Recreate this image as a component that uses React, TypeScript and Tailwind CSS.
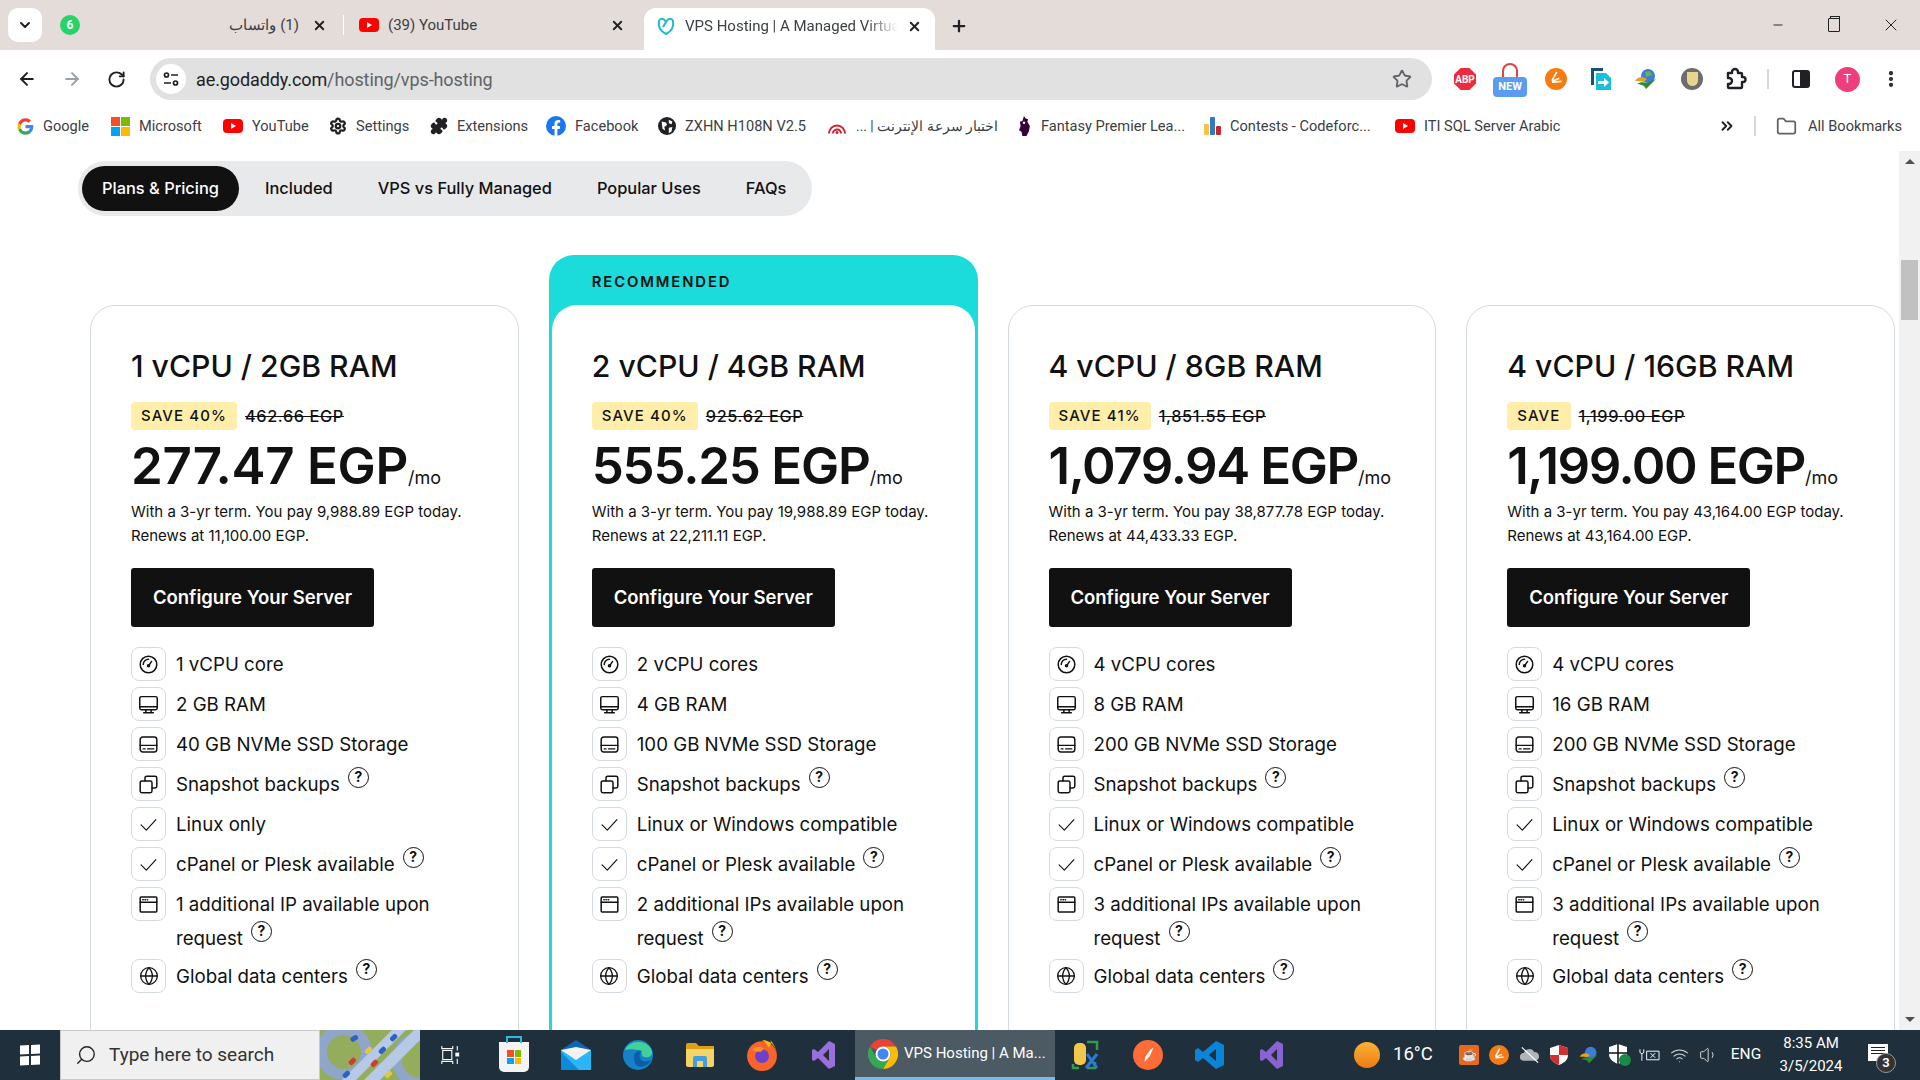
import {
  ArrowLeft,
  ArrowRight,
  ChevronDown,
  Globe,
  MoreVertical,
  Plus,
  RotateCw,
  Search,
  Settings,
  Star,
  X,
  Folder,
  ChevronsRight,
  Minus,
  Puzzle,
  Wifi,
  Volume1,
} from "lucide-react";
import type { ReactNode } from "react";

const YouTubeIcon = () => (
  <svg viewBox="0 0 20 20" className="w-[20px] h-[20px] shrink-0">
    <rect x="0" y="3" width="20" height="14" rx="4" fill="#f00" />
    <path d="M8 7l5 3-5 3z" fill="#fff" />
  </svg>
);

const GoogleIcon = () => (
  <svg viewBox="0 0 24 24" className="w-[17px] h-[17px] shrink-0">
    <path d="M23 12.3c0-.8-.1-1.600-.2-2.300H12v4.400h6.200c-.3 1.400-1.100 2.600-2.300 3.400v2.800h3.700c2.100-2 3.400-4.900 3.400-8.300z" fill="#4285f4" />
    <path d="M12 23.500c3.100 0 5.700-1 7.600-2.800l-3.700-2.800c-1 .7-2.300 1.100-3.900 1.100-3 0-5.500-2-6.400-4.700H1.800v2.900c1.900 3.800 5.800 6.300 10.200 6.300z" fill="#34a853" />
    <path d="M5.600 14.300c-.5-1.400-.5-3 0-4.500V6.900H1.800c-1.600 3.200-1.600 7 0 10.300z" fill="#fbbc05" />
    <path d="M12 5.100c1.700 0 3.200.6 4.400 1.700l3.300-3.300C17.700 1.600 15.100.5 12 .5 7.600.5 3.700 3 1.800 6.900l3.800 2.900C6.500 7.100 9 5.100 12 5.100z" fill="#ea4335" />
  </svg>
);

const MicrosoftIcon = () => (
  <div className="grid grid-cols-2 gap-[1px] w-[19px] h-[19px] shrink-0">
    <div className="bg-[#f25022]" />
    <div className="bg-[#7fba00]" />
    <div className="bg-[#00a4ef]" />
    <div className="bg-[#ffb900]" />
  </div>
);

const FacebookIcon = () => (
  <svg viewBox="0 0 24 24" className="w-[20px] h-[20px] shrink-0">
    <circle cx="12" cy="12" r="12" fill="#1877f2" />
    <path d="M16.500 15.500l.5-3.500h-3.300V9.800c0-1 .5-1.900 2-1.900H17V5c-2.800-.5-6.800-.6-6.800 4.400V12H7.200v3.500h3V24h3.500v-8.500z" fill="#fff" />
  </svg>
);

const GlobeBlack = () => (
  <svg viewBox="0 0 20 20" className="w-[18px] h-[18px] shrink-0">
    <circle cx="10" cy="10" r="10" fill="#202124" />
    <path d="M4 5l5 1 1 3-3 2 1 4-3-2zM12 3l4 2-1 3-3-1zM12 12l4-1-1 5-3 2z" fill="#fff" />
  </svg>
);

const SpeedIcon = () => (
  <svg viewBox="0 0 20 16" className="w-[20px] h-[17px] shrink-0" fill="none" strokeWidth="2">
    <path d="M2 15a8 8 0 0 1 16 0" stroke="#d5202c" />
    <path d="M6 15a4 4 0 0 1 8 0" stroke="#d5202c" />
    <circle cx="10" cy="14" r="1.500" fill="#d5202c" />
  </svg>
);

const FplIcon = () => (
  <svg viewBox="0 0 16 24" className="w-[16px] h-[20px] shrink-0">
    <path d="M8 0l2 3 3 1-1 3 3 5-1 6-3 6H6l-1-5-3-2 2-5-1-5 3-1z" fill="#37003c" />
    <circle cx="8" cy="8" r="1.500" fill="#fff" />
  </svg>
);

const CodeforcesIcon = () => (
  <div className="flex items-end gap-[1px] h-[18px] shrink-0">
    <div className="w-[5px] h-[11px] bg-[#f8c33f] rounded-[1px]" />
    <div className="w-[5px] h-[18px] bg-[#2f78c4] rounded-[1px]" />
    <div className="w-[5px] h-[9px] bg-[#c62828] rounded-[1px]" />
  </div>
);

const ExtensionsOutline = () => (
  <svg viewBox="0 0 24 24" className="w-[24px] h-[24px]" fill="none" stroke="#202124" strokeWidth="2.400" strokeLinejoin="round">
    <path d="M5 6h4V5a3 3 0 0 1 6 0v1h3a1 1 0 0 1 1 1v3h1a2.500 2.500 0 0 1 0 5h-1v5a1 1 0 0 1-1 1H6a1 1 0 0 1-1-1v-3h1a3 3 0 0 0 0-6H5z" />
  </svg>
);

const bookmarks: { icon: ReactNode; label: string; width: string; rtl?: boolean }[] = [
  { icon: <GoogleIcon />, label: "Google", width: "w-[94px]" },
  { icon: <MicrosoftIcon />, label: "Microsoft", width: "w-[112px]" },
  { icon: <YouTubeIcon />, label: "YouTube", width: "w-[106px]" },
  { icon: <Settings className="w-[18px] h-[18px] shrink-0 text-[#202124]" strokeWidth={3} />, label: "Settings", width: "w-[101px]" },
  { icon: <Puzzle className="w-[18px] h-[18px] shrink-0 text-[#202124] fill-[#202124]" />, label: "Extensions", width: "w-[116px]" },
  { icon: <FacebookIcon />, label: "Facebook", width: "w-[112px]" },
  { icon: <GlobeBlack />, label: "ZXHN H108N V2.5", width: "w-[169px]" },
  { icon: <SpeedIcon />, label: "اختبار سرعة الإنترنت | ...", width: "w-[189px]", rtl: true },
  { icon: <FplIcon />, label: "Fantasy Premier Lea...", width: "w-[188px]" },
  { icon: <CodeforcesIcon />, label: "Contests - Codeforc...", width: "w-[191px]" },
  { icon: <YouTubeIcon />, label: "ITI SQL Server Arabic", width: "w-[180px]" },
];

const navTabs = ["Included", "VPS vs Fully Managed", "Popular Uses", "FAQs"];

type Feature = { icon: string; text: string; help?: boolean };

type Plan = {
  title: string;
  save: string;
  was: string;
  price: string;
  priceClass: string;
  pay: string;
  renews: string;
  features: Feature[];
  recommended?: boolean;
};

const makeFeatures = (cpu: string, ram: string, disk: string, os: string, ips: string): Feature[] => [
  { icon: "gauge", text: cpu },
  { icon: "monitor", text: ram },
  { icon: "disk", text: disk },
  { icon: "copy", text: "Snapshot backups", help: true },
  { icon: "check", text: os },
  { icon: "check", text: "cPanel or Plesk available", help: true },
  { icon: "window", text: ips, help: true },
  { icon: "globe", text: "Global data centers", help: true },
];

const plans: Plan[] = [
  {
    title: "1 vCPU / 2GB RAM",
    save: "SAVE 40%",
    was: "462.66 EGP",
    price: "277.47 EGP",
    priceClass: "tracking-[-0.25px]",
    pay: "9,988.89",
    renews: "11,100.00",
    features: makeFeatures("1 vCPU core", "2 GB RAM", "40 GB NVMe SSD Storage", "Linux only", "1 additional IP available upon request"),
  },
  {
    title: "2 vCPU / 4GB RAM",
    save: "SAVE 40%",
    was: "925.62 EGP",
    price: "555.25 EGP",
    priceClass: "tracking-[-1.2px]",
    pay: "19,988.89",
    renews: "22,211.11",
    recommended: true,
    features: makeFeatures("2 vCPU cores", "4 GB RAM", "100 GB NVMe SSD Storage", "Linux or Windows compatible", "2 additional IPs available upon request"),
  },
  {
    title: "4 vCPU / 8GB RAM",
    save: "SAVE 41%",
    was: "1,851.55 EGP",
    price: "1,079.94 EGP",
    priceClass: "tracking-[-1.4px]",
    pay: "38,877.78",
    renews: "44,433.33",
    features: makeFeatures("4 vCPU cores", "8 GB RAM", "200 GB NVMe SSD Storage", "Linux or Windows compatible", "3 additional IPs available upon request"),
  },
  {
    title: "4 vCPU / 16GB RAM",
    save: "SAVE",
    was: "1,199.00 EGP",
    price: "1,199.00 EGP",
    priceClass: "tracking-[-1.5px]",
    pay: "43,164.00",
    renews: "43,164.00",
    features: makeFeatures("4 vCPU cores", "16 GB RAM", "200 GB NVMe SSD Storage", "Linux or Windows compatible", "3 additional IPs available upon request"),
  },
];

function FeatureIcon({ name }: { name: string }) {
  if (name === "globe") return <Globe className="w-[20px] h-[20px] text-[#111]" strokeWidth={1.6} />;
  return (
    <svg viewBox="0 0 24 24" className="w-[21px] h-[21px]" fill="none" stroke="#111" strokeWidth="1.700" strokeLinecap="round" strokeLinejoin="round">
      {name === "gauge" && (
        <>
          <circle cx="12" cy="12" r="9.500" />
          <path d="M12 6a6 6 0 0 0-6 6M15.500 8.500L12.500 13" />
          <circle cx="12" cy="13.500" r="1.200" />
        </>
      )}
      {name === "monitor" && (
        <>
          <rect x="2" y="3" width="20" height="15" rx="2" />
          <path d="M2 14.500h20M9 18v3.500M15 18v3.500M6.500 21.500h11" />
        </>
      )}
      {name === "disk" && (
        <>
          <rect x="2.500" y="3.500" width="19" height="17" rx="3" />
          <path d="M2.500 13h19M6 17h2M11 17h7" />
        </>
      )}
      {name === "copy" && (
        <>
          <rect x="2.500" y="8" width="13.500" height="13.500" rx="2" />
          <path d="M8 8V4.500a2 2 0 0 1 2-2h9.500a2 2 0 0 1 2 2V14a2 2 0 0 1-2 2H16" />
        </>
      )}
      {name === "check" && <path d="M3.500 12.500l6 6L20.500 6.500" strokeWidth="1.300" />}
      {name === "window" && (
        <>
          <rect x="2.500" y="3.500" width="19" height="17" rx="1" />
          <path d="M2.500 9.500h19M5.500 6.500h.5M8 6.500h.5M10.500 6.500h.5" />
        </>
      )}
    </svg>
  );
}

const HelpIcon = () => (
  <span className="inline-flex items-center justify-center w-[21px] h-[21px] rounded-full border-[1.7px] border-[#111] text-[14px] font-bold leading-none ml-[8px] align-[6px] -translate-y-[3px]">
    ?
  </span>
);

function PlanCard({ plan }: { plan: Plan }) {
  const body = (
    <div className={`bg-white rounded-[25px] px-[40px] h-[760px] ${plan.recommended ? "pt-[39px]" : "pt-[38px] border border-[#d4dbe0]"}`}>
      <h3 className="text-[30.2px] leading-[44px] font-medium text-[#111] whitespace-nowrap">{plan.title}</h3>
      <div className="flex items-center mt-[14px] gap-[8px]">
        <span className="bg-[#ffeeaa] rounded-[4px] h-[28px] px-[10px] flex items-center text-[15px] font-medium tracking-[1.1px] text-[#111]">
          {plan.save}
        </span>
        <span className="text-[16.3px] font-medium tracking-[0.6px] text-[#111] line-through">{plan.was}</span>
      </div>
      <div className="flex items-end mt-[8px] h-[56px] whitespace-nowrap">
        <span className={`text-[51px] leading-[56px] font-semibold text-[#111] ${plan.priceClass}`}>{plan.price}</span>
        <span className="text-[18px] text-[#111] leading-[20px] mb-[6px]">/mo</span>
      </div>
      <p className="mt-[6px] text-[15px] leading-[24px] text-[#111] whitespace-nowrap">
        With a 3-yr term. You pay {plan.pay} EGP today.
        <br />
        Renews at {plan.renews} EGP.
      </p>
      <div className="mt-[20px] w-[243px] h-[59px] rounded-[3px] bg-[#111] flex items-center justify-center text-white text-[18.5px] font-semibold">
        Configure Your Server
      </div>
      <ul className="mt-[20px] flex flex-col gap-[6px]">
        {plan.features.map((f, i) => (
          <li key={i} className="flex gap-[10px] last:-mt-[2px]">
            <span className="w-[35px] h-[34px] shrink-0 rounded-[8px] border border-[#d4dbe0] flex items-center justify-center">
              <FeatureIcon name={f.icon} />
            </span>
            <span className="text-[18.7px] leading-[34px] text-[#111] translate-y-[1px]">
              {f.text}
              {f.help && <HelpIcon />}
            </span>
          </li>
        ))}
      </ul>
    </div>
  );

  if (plan.recommended) {
    return (
      <div className="w-[428.75px] shrink-0 -mt-[50px] rounded-t-[25px] bg-[#1bdbdb] px-[3px]">
        <div className="h-[50px] flex items-center pl-[40px] pt-[4px] text-[14.8px] font-semibold tracking-[1.9px] text-[#111]">RECOMMENDED</div>
        {body}
      </div>
    );
  }
  return <div className="w-[428.75px] shrink-0">{body}</div>;
}

function TaskIcon({ children, className = "" }: { children: ReactNode; className?: string }) {
  return <div className={`w-[62px] h-full flex items-center justify-center shrink-0 ${className}`}>{children}</div>;
}

function TraySlot({ children }: { children: ReactNode }) {
  return <div className="w-[30px] flex items-center justify-center shrink-0">{children}</div>;
}

function HighwayThumb() {
  return (
    <svg viewBox="0 0 100 50" className="w-[100px] h-[50px] shrink-0" preserveAspectRatio="none">
      <rect width="100" height="50" fill="#93ad5c" />
      <circle cx="24" cy="22" r="28" fill="#8fa6c9" />
      <circle cx="24" cy="22" r="17" fill="#93ad5c" />
      <circle cx="100" cy="30" r="28" fill="#8fa6c9" />
      <circle cx="100" cy="30" r="18" fill="#93ad5c" />
      <path d="M22 50L72 0h14L36 50zM44 50L94 0h6v10L60 50z" fill="#b6c9e6" />
      <rect x="30" y="6" width="8" height="5" rx="2" fill="#2a62c7" transform="rotate(-30 34 8)" />
      <rect x="70" y="5" width="8" height="5" rx="2" fill="#2a62c7" transform="rotate(-45 74 8)" />
      <rect x="44" y="18" width="8" height="5" rx="2" fill="#e8c53a" transform="rotate(-45 48 20)" />
      <rect x="58" y="18" width="8" height="5" rx="2" fill="#2a62c7" transform="rotate(-45 62 20)" />
      <rect x="28" y="29" width="8" height="5" rx="2" fill="#c6403a" transform="rotate(-45 32 31)" />
      <rect x="50" y="31" width="8" height="5" rx="2" fill="#c6403a" transform="rotate(-45 54 33)" />
      <rect x="22" y="42" width="8" height="5" rx="2" fill="#2a62c7" transform="rotate(-45 26 44)" />
      <rect x="64" y="42" width="8" height="5" rx="2" fill="#e8c53a" transform="rotate(-45 68 44)" />
    </svg>
  );
}

const VsIcon = ({ color = "#9a6fdc" }: { color?: string }) => (
  <svg viewBox="0 0 24 30" className="w-[30px] h-[30px]">
    <path d="M17 1l6 3v22l-6 3L6 18l-4 3-2-1V10l2-1 4 3zm0 8l-6 6 6 6z" fill={color} />
  </svg>
);

const ChromeLogo = () => (
  <svg viewBox="0 0 30 30" className="w-[30px] h-[30px] shrink-0">
    <path d="M2 7.500A15 15 0 0 1 28 7.500H15A7.500 7.500 0 0 0 8.500 11.250z" fill="#ea4335" />
    <path d="M28 7.500A15 15 0 0 1 15 30L21.500 18.750A7.500 7.500 0 0 0 15 7.500z" fill="#fbbc05" />
    <path d="M2 7.500L8.500 18.750A7.500 7.500 0 0 0 21.500 18.750L15 30A15 15 0 0 1 2 7.500z" fill="#34a853" />
    <circle cx="15" cy="15" r="7.500" fill="#fff" />
    <circle cx="15" cy="15" r="5.500" fill="#4285f4" />
  </svg>
);

export default function App() {
  return (
    <div className="w-[1920px] h-[1080px] overflow-hidden flex flex-col bg-white font-['Inter',sans-serif] text-[#111]">
      {/* tab strip */}
      <div className="h-[50px] shrink-0 bg-[#e3dcd9] flex items-end pl-[8px] font-['Roboto',sans-serif] text-[15px] text-[#3c4043]">
        <div className="w-[34px] h-[34px] mb-[8px] rounded-[10px] bg-white flex items-center justify-center">
          <ChevronDown className="w-[16px] h-[16px] text-[#202124]" strokeWidth={3} />
        </div>
        <div className="w-[301px] h-[42px] flex items-center pl-[18px] pr-[16px] pb-[8px]">
          <span className="w-[20px] h-[20px] rounded-full bg-[#25d366] text-white text-[12px] font-bold flex items-center justify-center">6</span>
          <span className="flex-1 text-right pr-[13px]" dir="rtl">(1) واتساب</span>
          <X className="w-[15px] h-[15px] text-[#202124]" strokeWidth={3} />
        </div>
        <div className="w-[1px] h-[20px] bg-white mb-[15px]" />
        <div className="w-[300px] h-[42px] flex items-center pl-[15px] pr-[10px] gap-[9px] pb-[8px]">
          <YouTubeIcon />
          <span className="flex-1">(39) YouTube</span>
          <X className="w-[15px] h-[15px] mr-[9px] text-[#202124]" strokeWidth={3} />
        </div>
        <div className="w-[291px] h-[42px] bg-white rounded-t-[12px] flex items-center pl-[12px] pr-[13px] gap-[9px] pb-[6px]">
          <svg viewBox="0 0 20 20" className="w-[20px] h-[20px] shrink-0" fill="none" stroke="#1bbdc9" strokeWidth="2">
            <path d="M10 18C4 15 2 10 3 5c1-3 5-3 7 1 2-4 6-4 7-1 1 5-1 10-7 13zM10 6l-3 5" />
          </svg>
          <span className="flex-1 min-w-0 whitespace-nowrap [mask-image:linear-gradient(to_right,black_85%,transparent)]">VPS Hosting | A Managed Virtua</span>
          <X className="w-[15px] h-[15px] shrink-0 text-[#202124]" strokeWidth={3} />
        </div>
        <div className="h-[42px] flex items-center ml-[15px] pb-[6px]">
          <Plus className="w-[18px] h-[18px] text-[#202124]" strokeWidth={3} />
        </div>
        <div className="ml-auto h-[50px] flex items-center gap-[41px] pr-[19px] text-[#202124]">
          <Minus className="w-[14px] h-[14px]" strokeWidth={1.6} />
          <span className="relative w-[12px] h-[14px] border-[1.5px] border-[#202124] rounded-[1px] ml-[2px]">
            <span className="absolute -top-[3px] left-[1px] w-[10px] h-[3px] border-[1.5px] border-b-0 border-[#202124]" />
          </span>
          <X className="w-[20px] h-[20px]" strokeWidth={1.2} />
        </div>
      </div>

      {/* toolbar */}
      <div className="h-[58px] shrink-0 bg-white rounded-t-[10px] flex items-center font-['Roboto',sans-serif]">
        <div className="w-[150px] flex items-center pl-[17px] gap-[25px] shrink-0">
          <ArrowLeft className="w-[20px] h-[20px] text-[#202124]" strokeWidth={2.4} />
          <ArrowRight className="w-[20px] h-[20px] text-[#9aa0a6]" strokeWidth={2.4} />
          <RotateCw className="w-[19px] h-[19px] text-[#202124]" strokeWidth={2.4} />
        </div>
        <div className="w-[1282px] h-[42px] rounded-full bg-[#e1e1e1] flex items-center pl-[6px] pr-[20px] shrink-0">
          <span className="w-[30px] h-[30px] bg-white rounded-full flex items-center justify-center">
            <svg viewBox="0 0 16 16" className="w-[16px] h-[16px]" fill="none" stroke="#202124" strokeWidth="1.700">
              <circle cx="3.500" cy="4" r="2" />
              <path d="M8 4h7M1 12h7" />
              <circle cx="12.500" cy="12" r="2" />
            </svg>
          </span>
          <span className="ml-[10px] text-[18px] tracking-[-0.1px] text-[#202124]">
            ae.godaddy.com<span className="text-[#5f6368]">/hosting/vps-hosting</span>
          </span>
          <Star className="ml-auto w-[20px] h-[20px] text-[#5f6368]" strokeWidth={2.2} />
        </div>
        <div className="flex items-center pl-[22px] gap-[21px] flex-1">
          <span className="w-[22px] h-[22px] bg-[#ee2a3c] text-white text-[10px] font-bold flex items-center justify-center [clip-path:polygon(30%_0,70%_0,100%_30%,100%_70%,70%_100%,30%_100%,0_70%,0_30%)]">ABP</span>
          <span className="relative w-[34px] h-[28px] mt-[8px] -ml-[4px]">
            <span className="absolute left-[9px] -top-[6px] w-[16px] h-[14px] rounded-t-full border-2 border-b-0 border-[#d44]" />
            <span className="absolute left-0 bottom-0 w-[34px] h-[20px] rounded-[4px] bg-[#5b9cf0] text-white text-[11px] font-bold flex items-center justify-center">NEW</span>
          </span>
          <span className="w-[22px] h-[22px] -ml-[3px] rounded-full bg-[#f57c14] flex items-center justify-center">
            <svg viewBox="0 0 20 20" className="w-[16px] h-[16px]" fill="none" stroke="#fff" strokeWidth="2">
              <path d="M11 1L5 12M14 9l-9 4M17 13l-12 1" />
            </svg>
          </span>
          <svg viewBox="0 0 22 24" className="w-[22px] h-[24px] ml-[2px]">
            <path d="M1 1h12v3H4v14H1z" fill="#1c4e80" />
            <path d="M6 6h10l5 5v12H6z" fill="#16c0e0" />
            <path d="M8 14h6v-3l5 4.500-5 4.500v-3H8z" fill="#fff" />
          </svg>
          <svg viewBox="0 0 24 24" className="w-[24px] h-[24px] ml-[1px]">
            <circle cx="14" cy="9" r="7" fill="#3b7dd8" />
            <path d="M11 5l5-1 2 4-6 2z" fill="#6ab04c" />
            <path d="M1 14c3-5 8-5 12-2l-3 3c-3-1-5-1-9-1z" fill="#e8a020" />
            <path d="M3 17c3-2 6-2 10-1l9-4-10 10-2-3c-2-1-4-2-7-2z" fill="#2e8b2e" />
          </svg>
          <span className="w-[22px] h-[22px] ml-[2px] rounded-full bg-[#6d6d6d] flex items-center justify-center">
            <span className="w-[11px] h-[14px] bg-[#e8d48a] rounded-b-full rounded-t-[3px]" />
          </span>
          <span className="-ml-[1px]">
            <ExtensionsOutline />
          </span>
          <span className="w-[2px] h-[20px] bg-[#dcd6d3] -ml-[1px]" />
          <span className="w-[18px] h-[18px] ml-[2px] rounded-[3px] border-2 border-[#202124] flex justify-end">
            <span className="w-[8px] h-full bg-[#202124]" />
          </span>
          <span className="w-[25px] h-[25px] ml-[4px] rounded-full bg-[#ee3f7c] text-white text-[13px] flex items-center justify-center">T</span>
          <MoreVertical className="w-[20px] h-[20px] text-[#202124]" strokeWidth={3} />
        </div>
      </div>

      {/* bookmarks */}
      <div className="h-[37px] shrink-0 bg-white flex items-center pl-[17px] font-['Roboto',sans-serif] text-[14.6px] text-[#3c4043]">
        {bookmarks.map((b) => (
          <div key={b.label} className={`flex items-center gap-[9px] shrink-0 whitespace-nowrap overflow-hidden ${b.width}`}>
            {b.icon}
            <span dir={b.rtl ? "rtl" : undefined} className={b.rtl ? "text-[13.8px]" : ""}>
              {b.label}
            </span>
          </div>
        ))}
        <div className="flex items-center ml-auto pr-[18px]">
          <ChevronsRight className="w-[18px] h-[18px] text-[#202124]" strokeWidth={2.5} />
          <span className="w-[2px] h-[20px] bg-[#dcd6d3] ml-[18px] mr-[20px]" />
          <Folder className="w-[21px] h-[21px] text-[#5f6368] mr-[11px]" strokeWidth={2} />
          <span>All Bookmarks</span>
        </div>
      </div>

      {/* page */}
      <div className="flex-1 flex overflow-hidden">
        <main className="flex-1 overflow-hidden">
          <div className="ml-[78px] mt-[16px] w-[734px] h-[55px] rounded-full bg-[#e8e9ea] flex items-center px-[4px] text-[16.400px] font-medium text-[#111]">
            <span className="h-[45px] w-[157px] rounded-full bg-[#111] text-white flex items-center justify-center">Plans &amp; Pricing</span>
            <span className="ml-[26px]">{navTabs[0]}</span>
            <span className="ml-[45px]">{navTabs[1]}</span>
            <span className="ml-[45px]">{navTabs[2]}</span>
            <span className="ml-[45px]">{navTabs[3]}</span>
          </div>
          <div className="flex gap-[30px] pl-[90px] mt-[89px]">
            {plans.map((p) => (
              <PlanCard key={p.title} plan={p} />
            ))}
          </div>
        </main>
        <div className="w-[21px] shrink-0 mt-[6px] bg-[#f1f1f1] flex flex-col items-center">
          <div className="mt-[8px] w-0 h-0 border-x-[5px] border-x-transparent border-b-[5px] border-b-[#505050]" />
          <div className="mt-[96px] w-[17px] h-[60px] bg-[#c1c1c1]" />
          <div className="mt-auto mb-[8px] w-0 h-0 border-x-[5px] border-x-transparent border-t-[5px] border-t-[#505050]" />
        </div>
      </div>

      {/* taskbar */}
      <div className="h-[50px] shrink-0 bg-[#1f2f3b] flex items-center font-['Roboto',sans-serif] text-white">
        <div className="w-[60px] h-full flex items-center justify-center shrink-0">
          <div className="grid grid-cols-2 gap-[2px] w-[20px] h-[20px] -skew-y-3">
            <div className="bg-white" />
            <div className="bg-white" />
            <div className="bg-white" />
            <div className="bg-white" />
          </div>
        </div>
        <div className="w-[260px] h-full shrink-0 bg-[#f0f0f0] border border-[#c9c9c9] flex items-center pl-[14px] gap-[12px] text-[19px] text-[#333]">
          <Search className="w-[22px] h-[22px] -scale-x-100 text-[#222]" strokeWidth={1.5} />
          Type here to search
        </div>
        <HighwayThumb />
        <div className="w-[4px] shrink-0" />
        <TaskIcon className="ml-[-5px]">
          <svg viewBox="0 0 20 22" className="w-[20px] h-[20px]" fill="none" stroke="#fff" strokeWidth="1.200">
            <path d="M1 1v3h12V1M2 6h10v10H2zM1 21v-3h12v3M18 1v5M18 15v6" />
            <rect x="16.500" y="9" width="3" height="3" fill="#fff" />
          </svg>
        </TaskIcon>
        <TaskIcon className="ml-[2px]">
          <div className="relative w-[30px] h-[30px] bg-[#f4f4f4] rounded-b-[5px] mt-[4px] grid grid-cols-2 gap-[1px] p-[8px]">
            <span className="absolute left-[7px] -top-[6px] w-[16px] h-[7px] border-2 border-b-0 border-[#2db7e8]" />
            <div className="bg-[#f25022]" />
            <div className="bg-[#7fba00]" />
            <div className="bg-[#00a4ef]" />
            <div className="bg-[#ffb900]" />
          </div>
        </TaskIcon>
        <TaskIcon>
          <svg viewBox="0 0 30 30" className="w-[30px] h-[30px]">
            <path d="M15 0l15 10H0z" fill="#0f64b4" />
            <path d="M0 10h30v20H0z" fill="#29b6f6" />
            <path d="M0 10l15 10 15-10-15-3z" fill="#f2f2f2" />
            <path d="M0 12l18 18H0z" fill="#0e8ad6" />
          </svg>
        </TaskIcon>
        <TaskIcon>
          <svg viewBox="0 0 30 30" className="w-[30px] h-[30px]">
            <circle cx="15" cy="15" r="15" fill="#1581c8" />
            <path d="M2 10C6 0 24-2 29 11c1 5-3 7-8 6-4-1 0-6-6-7C9 9 5 9 2 10z" fill="#41d09c" />
            <path d="M11 17c0-4 4-7 8-6-4 2-3 8 1 10 3 1 6 0 8-1-3 6-10 8-13 6-3-1-4-5-4-9z" fill="#0c5da8" />
          </svg>
        </TaskIcon>
        <TaskIcon>
          <svg viewBox="0 0 28 24" className="w-[28px] h-[24px]">
            <path d="M0 2a2 2 0 0 1 2-2h8l3 3h15v4H0z" fill="#d9a21b" />
            <path d="M0 6h28v16a2 2 0 0 1-2 2H2a2 2 0 0 1-2-2z" fill="#f6d365" />
            <path d="M7 24V15a2 2 0 0 1 2-2h10a2 2 0 0 1 2 2v9h-4v-6h-6v6z" fill="#3f9fe0" />
          </svg>
        </TaskIcon>
        <TaskIcon>
          <svg viewBox="0 0 30 30" className="w-[32px] h-[32px]">
            <circle cx="15" cy="16" r="14" fill="#f8642c" />
            <path d="M15 1c8 0 14 6 14 15 0-8-4-12-6-15 1 3 0 6-2 7-1-3-4-6-6-7z" fill="#ffb31a" />
            <circle cx="15" cy="16" r="6.500" fill="#6f3fc9" />
            <path d="M6 10c3-3 7-3 11-1l-3 3c-3 0-6 0-8-2z" fill="#ff9320" />
          </svg>
        </TaskIcon>
        <TaskIcon>
          <VsIcon />
        </TaskIcon>
        <div className="w-[200px] h-full shrink-0 bg-[#4c5a63] border-b-[3px] border-[#76b9ed] flex items-center pl-[13px] gap-[6px] text-[15px] whitespace-nowrap">
          <ChromeLogo />
          VPS Hosting | A Ma...
        </div>
        <TaskIcon>
          <svg viewBox="0 0 30 30" className="w-[30px] h-[30px]">
            <rect x="3" y="3" width="12" height="22" rx="5" fill="#f1c84b" />
            <path d="M16 2h10v8M24 22v6H16M2 24v4h6" fill="none" stroke="#2e9b4f" strokeWidth="2.500" />
            <path d="M16 14l10 14M26 14L15 28" stroke="#2a7bd8" strokeWidth="3" />
          </svg>
        </TaskIcon>
        <TaskIcon>
          <span className="w-[30px] h-[30px] rounded-full bg-[#ff6c37] flex items-center justify-center">
            <svg viewBox="0 0 20 20" className="w-[18px] h-[18px]">
              <path d="M16 2l-4 9-6 7 1-6 6-8z" fill="#fff" />
            </svg>
          </span>
        </TaskIcon>
        <TaskIcon>
          <svg viewBox="0 0 30 30" className="w-[30px] h-[30px]">
            <path d="M21 1l8 4v20l-8 4L8 18l-5 4-3-2V10l3-2 5 4zm0 8l-7 6 7 6z" fill="#0a84d6" />
          </svg>
        </TaskIcon>
        <TaskIcon>
          <VsIcon color="#8a63d2" />
        </TaskIcon>
        <div className="w-[26px] h-[26px] shrink-0 ml-[51px] rounded-full bg-gradient-to-b from-[#f9b233] to-[#ee7a16]" />
        <span className="ml-[13px] w-[40px] text-[18.5px] shrink-0 whitespace-nowrap">16°C</span>
        <div className="flex items-center ml-[21px] shrink-0">
          <TraySlot>
            <span className="w-[20px] h-[20px] bg-[#e8691b] rounded-[2px] text-[12px] flex items-center justify-center">☕</span>
          </TraySlot>
          <TraySlot>
            <span className="w-[20px] h-[20px] rounded-full bg-[#f57c14] flex items-center justify-center">
              <svg viewBox="0 0 20 20" className="w-[14px] h-[14px]" fill="none" stroke="#fff" strokeWidth="2">
                <path d="M11 1L5 12M14 9l-9 4M17 13l-12 1" />
              </svg>
            </span>
          </TraySlot>
          <TraySlot>
            <svg viewBox="0 0 22 18" className="w-[21px] h-[18px]">
              <path d="M5 15a4 4 0 0 1 0-8 6 6 0 0 1 11-1 4.500 4.500 0 0 1 1 9z" fill="#aeb4b8" />
              <path d="M3 1l17 16" stroke="#fff" strokeWidth="1.300" />
            </svg>
          </TraySlot>
          <TraySlot>
            <svg viewBox="0 0 18 20" className="w-[18px] h-[20px]">
              <path d="M9 0l9 3v7c0 5-4 8-9 10-5-2-9-5-9-10V3z" fill="#fff" />
              <path d="M9 0l9 3v7H9zM9 10v10c-5-2-9-5-9-10z" fill="#d32f2f" />
            </svg>
          </TraySlot>
          <TraySlot>
            <svg viewBox="0 0 24 24" className="w-[20px] h-[20px]">
              <circle cx="14" cy="9" r="7" fill="#3b7dd8" />
              <path d="M1 14c3-5 8-5 12-2l-3 3c-3-1-5-1-9-1z" fill="#e8a020" />
              <path d="M3 17c3-2 6-2 10-1l9-4-10 10-2-3c-2-1-4-2-7-2z" fill="#2e8b2e" />
            </svg>
          </TraySlot>
          <TraySlot>
            <span className="relative w-[20px] h-[22px]">
              <svg viewBox="0 0 18 20" className="w-[18px] h-[20px]">
                <path d="M9 0l9 3v7c0 5-4 8-9 10-5-2-9-5-9-10V3z" fill="#fff" />
                <path d="M9 0v20M0 9h18" stroke="#111" strokeWidth="1.500" />
              </svg>
              <span className="absolute -right-[2px] bottom-0 w-[12px] h-[12px] rounded-full bg-[#1a8a4a]" />
            </span>
          </TraySlot>
          <TraySlot>
            <svg viewBox="0 0 22 14" className="w-[21px] h-[14px]" fill="none" stroke="#fff" strokeWidth="1">
              <path d="M1 1v3c0 2 4 2 4 0V1M3 6v7M8 3h13v9H8zM12 5l5 5M17 5l-5 5" />
            </svg>
          </TraySlot>
          <TraySlot>
            <Wifi className="w-[19px] h-[19px] text-[#d5d8da]" strokeWidth={1.3} />
          </TraySlot>
          <TraySlot>
            <Volume1 className="w-[20px] h-[20px] text-[#e5e7e8]" strokeWidth={1.1} />
          </TraySlot>
        </div>
        <span className="ml-[5px] w-[34px] text-center text-[15.500px] shrink-0">ENG</span>
        <div className="ml-[13px] w-[70px] shrink-0 flex flex-col items-center text-[15px] leading-[23px] whitespace-nowrap">
          <span>8:35 AM</span>
          <span>3/5/2024</span>
        </div>
        <div className="relative ml-[22px] w-[20px] h-[17px] -mt-[6px] bg-white shrink-0 flex flex-col gap-[2px] p-[3px]">
          <span className="h-[1px] bg-[#222]" />
          <span className="h-[1px] bg-[#222]" />
          <span className="h-[1px] bg-[#222]" />
          <span className="absolute -right-[8px] -bottom-[12px] w-[20px] h-[20px] rounded-full border border-[#999] bg-[#333] text-white text-[13px] font-semibold flex items-center justify-center">3</span>
        </div>
      </div>
    </div>
  );
}
